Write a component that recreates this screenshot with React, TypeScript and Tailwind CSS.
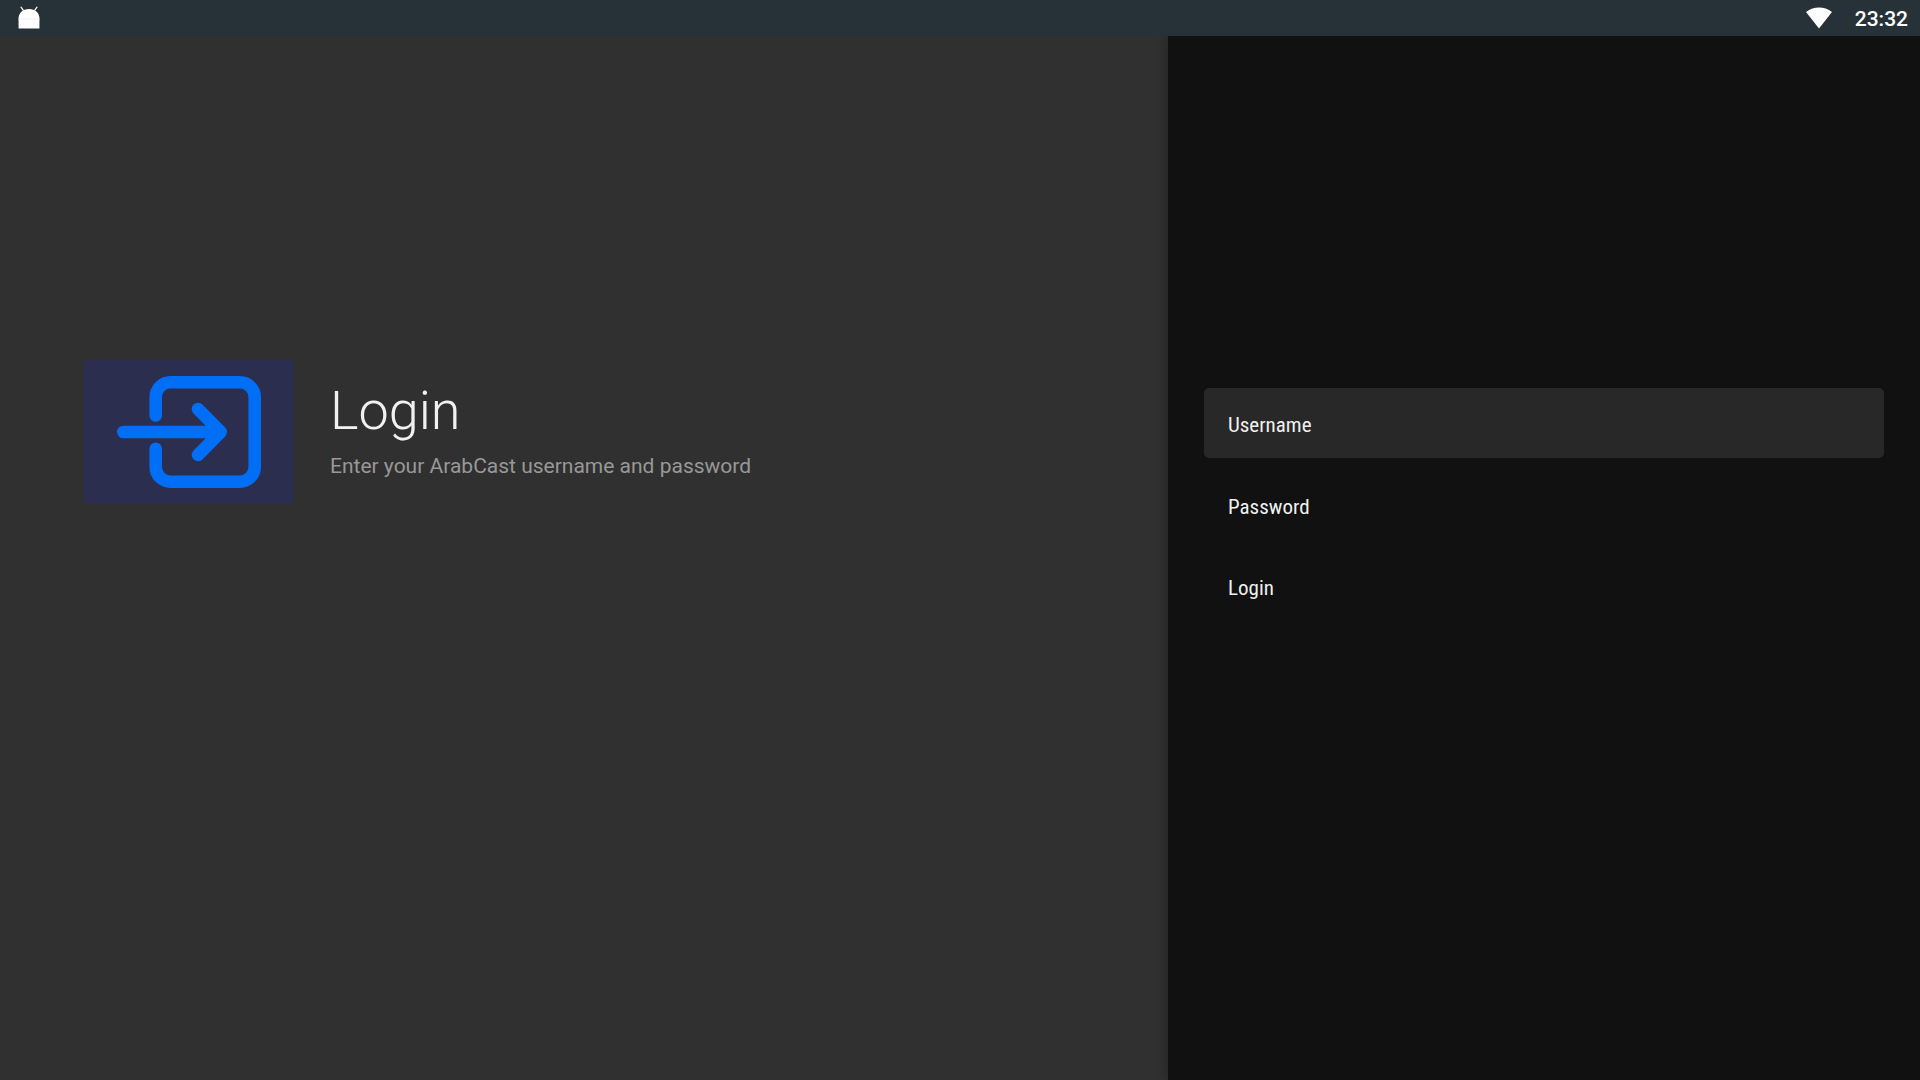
import { useState } from "react";

const AndroidIcon = () => (
  <svg width="24" height="24" viewBox="0 0 24 24" aria-hidden="true">
    <path
      d="M4 1.2l2.2 3M20 1.2l-2.2 3"
      stroke="#fff"
      strokeWidth="1.2"
      strokeLinecap="round"
    />
    <path
      d="M1 22V12.500C1 7 5.400 3 12 3s11 4 11 9.500V22q0 .6-.6.6H1.600q-.6 0-.6-.6z"
      transform="translate(.6 0) scale(.95 1)"
      fill="#fff"
    />
    <path d="M1.600 13h20.800" stroke="#eceff1" strokeWidth="1" />
  </svg>
);

const WifiIcon = () => (
  <svg width="28" height="22" viewBox="0 0 28 22" aria-hidden="true">
    <path d="M1 5C5 2 9.500.6 14 .6S23 2 27 5L14 21.400z" fill="#fff" />
  </svg>
);

const LoginImage = () => (
  <svg
    className="shrink-0 bg-[#2b2e4f]"
    width="210"
    height="144"
    viewBox="0 0 210 144"
    fill="none"
    stroke="#006ff6"
    strokeWidth="12.6"
    strokeLinecap="round"
    strokeLinejoin="round"
    aria-hidden="true"
  >
    <path d="M71.700 55.500V37a14.700 14.700 0 0 1 14.700-14.700h69.600a14.700 14.700 0 0 1 14.700 14.700v70a14.700 14.700 0 0 1-14.700 14.700H86.400A14.700 14.700 0 0 1 71.700 107V88.700" />
    <path d="M39.300 72h97.400M114 49l22.700 23L114 95" />
  </svg>
);

const StatusBar = () => (
  <header className="flex h-9 shrink-0 items-center justify-between bg-[#263238] pr-3 pl-[17px]">
    <AndroidIcon />
    <div className="flex items-center gap-[22px]">
      <WifiIcon />
      <time className="pt-0.5 text-[21px] leading-6 font-medium text-white">23:32</time>
    </div>
  </header>
);

const actionClass =
  "block h-[70px] w-full rounded-[5px] px-6 pt-1 text-left font-['Roboto_Condensed',Roboto,sans-serif] text-[21px] text-[#f0f0f0] outline-none placeholder:text-[#f0f0f0] placeholder:opacity-100";

export default function App() {
  const [username, setUsername] = useState("");
  const [password, setPassword] = useState("");

  return (
    <div className="flex min-h-screen flex-col bg-[#303030] font-[Roboto,sans-serif]">
      <StatusBar />
      <main className="flex grow overflow-hidden">
        <section className="flex grow items-start gap-9 pt-[324px] pl-21">
          <LoginImage />
          <div className="pt-5">
            <h1 className="text-[54px] leading-[62px] font-light text-[#f1f1f1]">Login</h1>
            <p className="mt-3 text-[21px] leading-6 text-[#989898]">
              Enter your ArabCast username and password
            </p>
          </div>
        </section>

        <form
          className="flex w-[752px] shrink-0 flex-col gap-3 bg-[#111111] px-9 pt-[352px] shadow-[0_0_12px_rgba(0,0,0,0.3)]"
          onSubmit={(e) => e.preventDefault()}
        >
          <input
            type="text"
            aria-label="Username"
            placeholder="Username"
            value={username}
            onChange={(e) => setUsername(e.target.value)}
            className={`${actionClass} bg-[#282828]`}
          />
          <input
            type="password"
            aria-label="Password"
            placeholder="Password"
            value={password}
            onChange={(e) => setPassword(e.target.value)}
            className={`${actionClass} bg-transparent`}
          />
          <button type="submit" className={`${actionClass} bg-transparent`}>
            Login
          </button>
        </form>
      </main>
    </div>
  );
}
